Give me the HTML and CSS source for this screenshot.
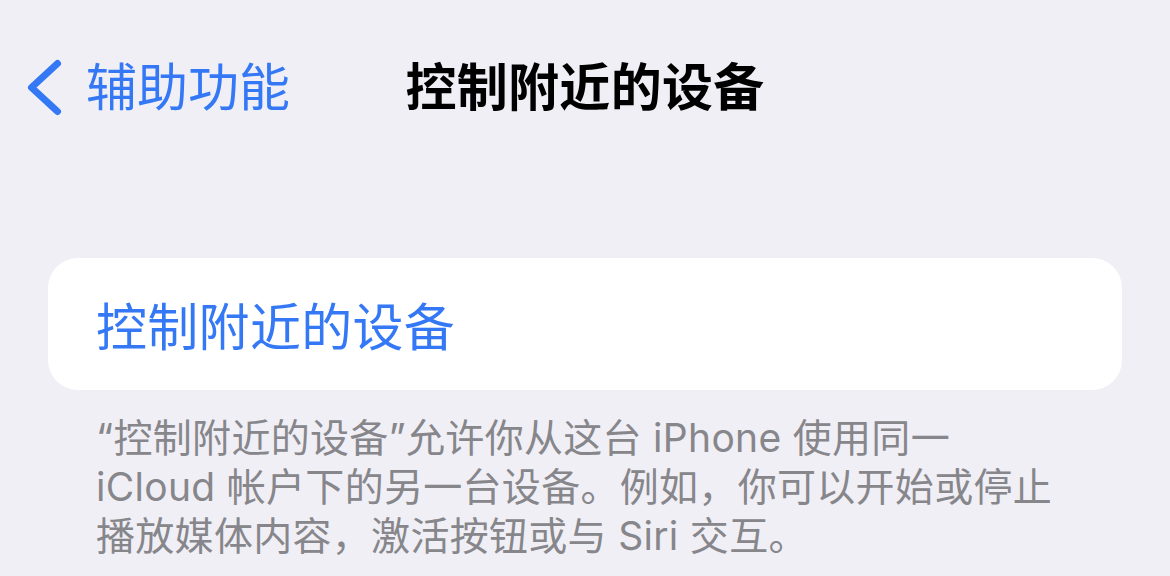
FILE: index.html
```html
<!DOCTYPE html>
<html lang="zh-CN">
<head>
<meta charset="utf-8">
<title>控制附近的设备</title>
<link rel="stylesheet" href="styles.css">
</head>
<body>
  <header class="navbar">
    <a class="back" href="#">
      <svg class="chevron" width="40" height="60" viewBox="0 0 40 60" aria-hidden="true">
        <polyline points="33.5,5.5 7.5,29.5 33.5,53.5" fill="none" stroke="currentColor" stroke-width="7" stroke-linecap="round" stroke-linejoin="round"/>
      </svg>
      <span class="back-label">辅助功能</span>
    </a>
    <h1 class="title">控制附近的设备</h1>
    <div class="spacer"></div>
  </header>

  <main class="content">
    <section class="group">
      <div class="cell">
        <span class="cell-label">控制附近的设备</span>
      </div>
    </section>
    <p class="footnote">“控制附近的设备”允许你从这台 iPhone 使用同一<br>iCloud 帐户下的另一台设备。例如，你可以开始或停止<br>播放媒体内容，激活按钮或与 Siri 交互。</p>
  </main>
</body>
</html>
```

FILE: styles.css
```css
html, body {
  margin: 0;
  padding: 0;
}

body {
  background: #f0eff5;
  font-family: "Inter", "Noto Sans CJK SC", sans-serif;
  color: #000;
  width: 1170px;
  height: 576px;
  overflow: hidden;
}

.navbar {
  height: 176px;
  display: grid;
  grid-template-columns: 1fr auto 1fr;
  align-items: center;
}

.back {
  display: flex;
  align-items: center;
  gap: 22px;
  padding-left: 24px;
  color: #3478f6;
  text-decoration: none;
}

.chevron {
  display: block;
  flex: none;
}

.back-label {
  font-size: 51px;
  line-height: 60px;
}

.title {
  margin: 0;
  font-size: 51px;
  font-weight: 600;
  line-height: 60px;
  letter-spacing: 0.3px;
}

.content {
  padding: 82px 48px 0;
}

.group {
  background: #fff;
  border-radius: 30px;
}

.cell {
  height: 132px;
  display: flex;
  align-items: center;
  padding: 0 48px;
}

.cell-label {
  font-size: 51px;
  letter-spacing: 0.3px;
  color: #3478f6;
}

.footnote {
  margin: 23px 0 0;
  padding: 0 48px;
  font-size: 39px;
  line-height: 49px;
  letter-spacing: 0.3px;
  color: #86868b;
}
```
